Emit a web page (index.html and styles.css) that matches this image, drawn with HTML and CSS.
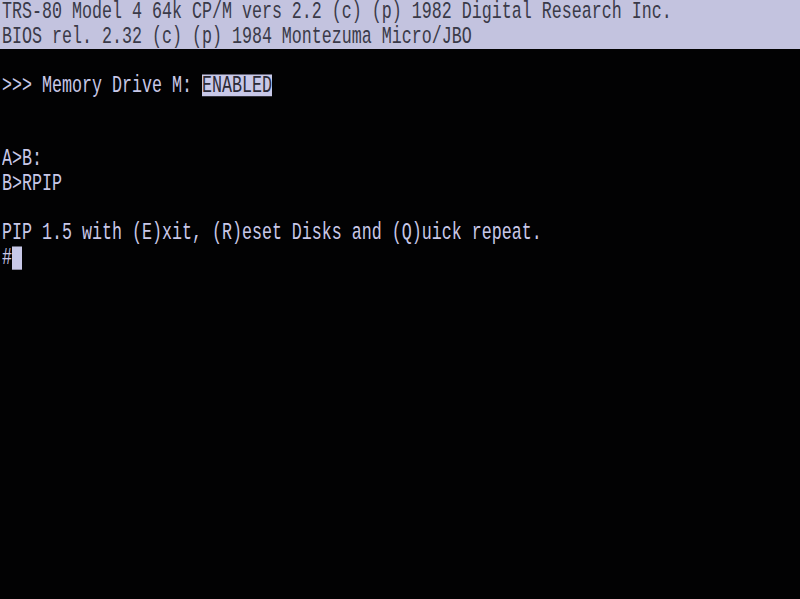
FILE: index.html
```html
<!DOCTYPE html>
<html>
<head>
<meta charset="utf-8">
<link rel="stylesheet" href="styles.css">
</head>
<body>
<div class="screen">
  <div class="status">
    <div class="line">TRS-80 Model 4 64k CP/M vers 2.2 (c) (p) 1982 Digital Research Inc.</div>
    <div class="line">BIOS rel. 2.32 (c) (p) 1984 Montezuma Micro/JBO</div>
  </div>
  <div class="console">
    <div class="line"> </div>
    <div class="line">&gt;&gt;&gt; Memory Drive M: <span class="inverse">ENABLED</span></div>
    <div class="line"> </div>
    <div class="line"> </div>
    <div class="line">A&gt;B:</div>
    <div class="line">B&gt;RPIP</div>
    <div class="line"> </div>
    <div class="line">PIP 1.5 with (E)xit, (R)eset Disks and (Q)uick repeat.</div>
    <div class="line">#<span class="cursor"></span></div>
  </div>
</div>
</body>
</html>
```
FILE: styles.css
```css
html, body {
  margin: 0;
  padding: 0;
  background: #000;
}
.screen {
  width: 800px;
  height: 599px;
  overflow: hidden;
  background: #020203;
  font-family: "Liberation Mono", "DejaVu Sans Mono", monospace;
  font-size: 16.667px;
  color: #c8c8e8;
}
.status {
  background: #c3c3df;
  color: #3a3a48;
  height: 49px;
}
.line {
  height: 24.6px;
  line-height: 24.6px;
  white-space: pre;
  padding-left: 2px;
  transform: scaleY(1.45);
  transform-origin: 0 48%;
}
.inverse {
  display: inline-block;
  background: #c8c8e8;
  color: #2a2a36;
  height: 15px;
  line-height: 15px;
  vertical-align: 0;
}
.cursor {
  display: inline-block;
  width: 10px;
  height: 16.5px;
  margin-left: 0;
  background: #c8c8e8;
  vertical-align: -4px;
}
```
